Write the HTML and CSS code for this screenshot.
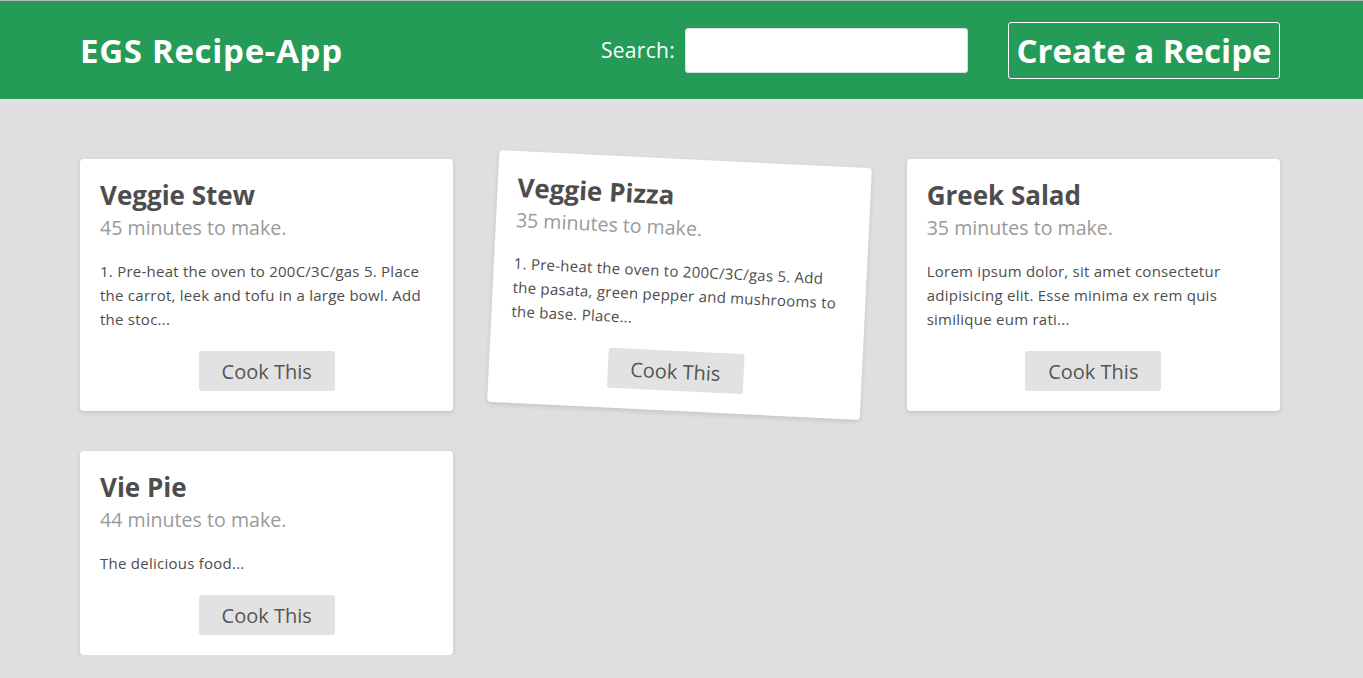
FILE: index.html
```html
<!DOCTYPE html>
<html lang="en">
<head>
<meta charset="utf-8">
<title>EGS Recipe-App</title>
<link rel="stylesheet" href="styles.css">
</head>
<body>
<header class="topbar">
  <div class="topbar-inner">
    <h1 class="brand">EGS Recipe-App</h1>
    <div class="actions">
      <label class="search">Search: <input type="text" class="search-input"></label>
      <button class="create-btn">Create a Recipe</button>
    </div>
  </div>
</header>
<main class="recipes">
  <article class="card">
    <h2 class="card-title">Veggie Stew</h2>
    <p class="card-time">45 minutes to make.</p>
    <p class="card-text">1. Pre-heat the oven to 200C/3C/gas 5. Place the carrot, leek and tofu in a large bowl. Add the stoc...</p>
    <div class="card-foot"><button class="cook-btn">Cook This</button></div>
  </article>
  <article class="card card-tilted">
    <h2 class="card-title">Veggie Pizza</h2>
    <p class="card-time">35 minutes to make.</p>
    <p class="card-text">1. Pre-heat the oven to 200C/3C/gas 5. Add the pasata, green pepper and mushrooms to the base. Place...</p>
    <div class="card-foot"><button class="cook-btn">Cook This</button></div>
  </article>
  <article class="card">
    <h2 class="card-title">Greek Salad</h2>
    <p class="card-time">35 minutes to make.</p>
    <p class="card-text">Lorem ipsum dolor, sit amet consectetur adipisicing elit. Esse minima ex rem quis similique eum rati...</p>
    <div class="card-foot"><button class="cook-btn">Cook This</button></div>
  </article>
  <article class="card">
    <h2 class="card-title">Vie Pie</h2>
    <p class="card-time">44 minutes to make.</p>
    <p class="card-text">The delicious food...</p>
    <div class="card-foot"><button class="cook-btn">Cook This</button></div>
  </article>
</main>
</body>
</html>
```
FILE: styles.css
```css
* { box-sizing: border-box; }
html, body {
  margin: 0;
  padding: 0;
  background: #dfdfdf;
  font-family: "Open Sans", "Lato", sans-serif;
  color: #4a4a4a;
}
.topbar {
  background: #249c58;
  border-top: 1px solid #b8b8b8;
  height: 99px;
}
.topbar-inner {
  width: 1200px;
  margin-left: 80px;
  height: 100%;
  display: flex;
  align-items: center;
  justify-content: space-between;
}
.brand {
  margin: 0;
  color: #fff;
  font-size: 33px;
  font-weight: 700;
  letter-spacing: 0.7px;
}
.actions {
  display: flex;
  align-items: center;
  gap: 40px;
}
.search {
  color: #fff;
  font-size: 21px;
  letter-spacing: 0.3px;
  display: flex;
  align-items: center;
  gap: 10px;
}
.search-input {
  width: 283px;
  height: 45px;
  border: 1px solid #ddd;
  border-radius: 3px;
  background: #fff;
}
.create-btn {
  height: 57px;
  padding: 0;
  background: transparent;
  border: 1px solid #fff;
  border-radius: 3px;
  color: #fff;
  font-family: inherit;
  font-size: 33px;
  font-weight: 700;
  letter-spacing: 0;
  width: 272px;
}
.recipes {
  width: 1200px;
  margin: 60px 0 0 80px;
  display: grid;
  grid-template-columns: repeat(3, 1fr);
  column-gap: 40px;
  row-gap: 40px;
  align-items: start;
}
.card {
  background: #fff;
  border-radius: 4px;
  box-shadow: 0 2px 5px rgba(0,0,0,0.12);
  padding: 20px 20px 20px;
}
.card-tilted {
  transform: rotate(2.8deg);
}
.card-title {
  margin: 0;
  font-size: 26px;
  line-height: 32px;
  font-weight: 700;
  color: #4d4d4d;
}
.card-time {
  margin: 4px 0 0;
  font-size: 19.6px;
  line-height: 26px;
  color: #9a9a9a;
}
.card-text {
  margin: 18px 0 0;
  font-size: 15px;
  line-height: 24px;
  letter-spacing: 0.25px;
  color: #4d4d4d;
}
.card-foot {
  display: flex;
  justify-content: center;
  margin-top: 20px;
}
.cook-btn {
  width: 136px;
  height: 40px;
  border: none;
  border-radius: 3px;
  background: #e2e2e2;
  color: #555;
  font-family: inherit;
  font-size: 20px;
}
```
